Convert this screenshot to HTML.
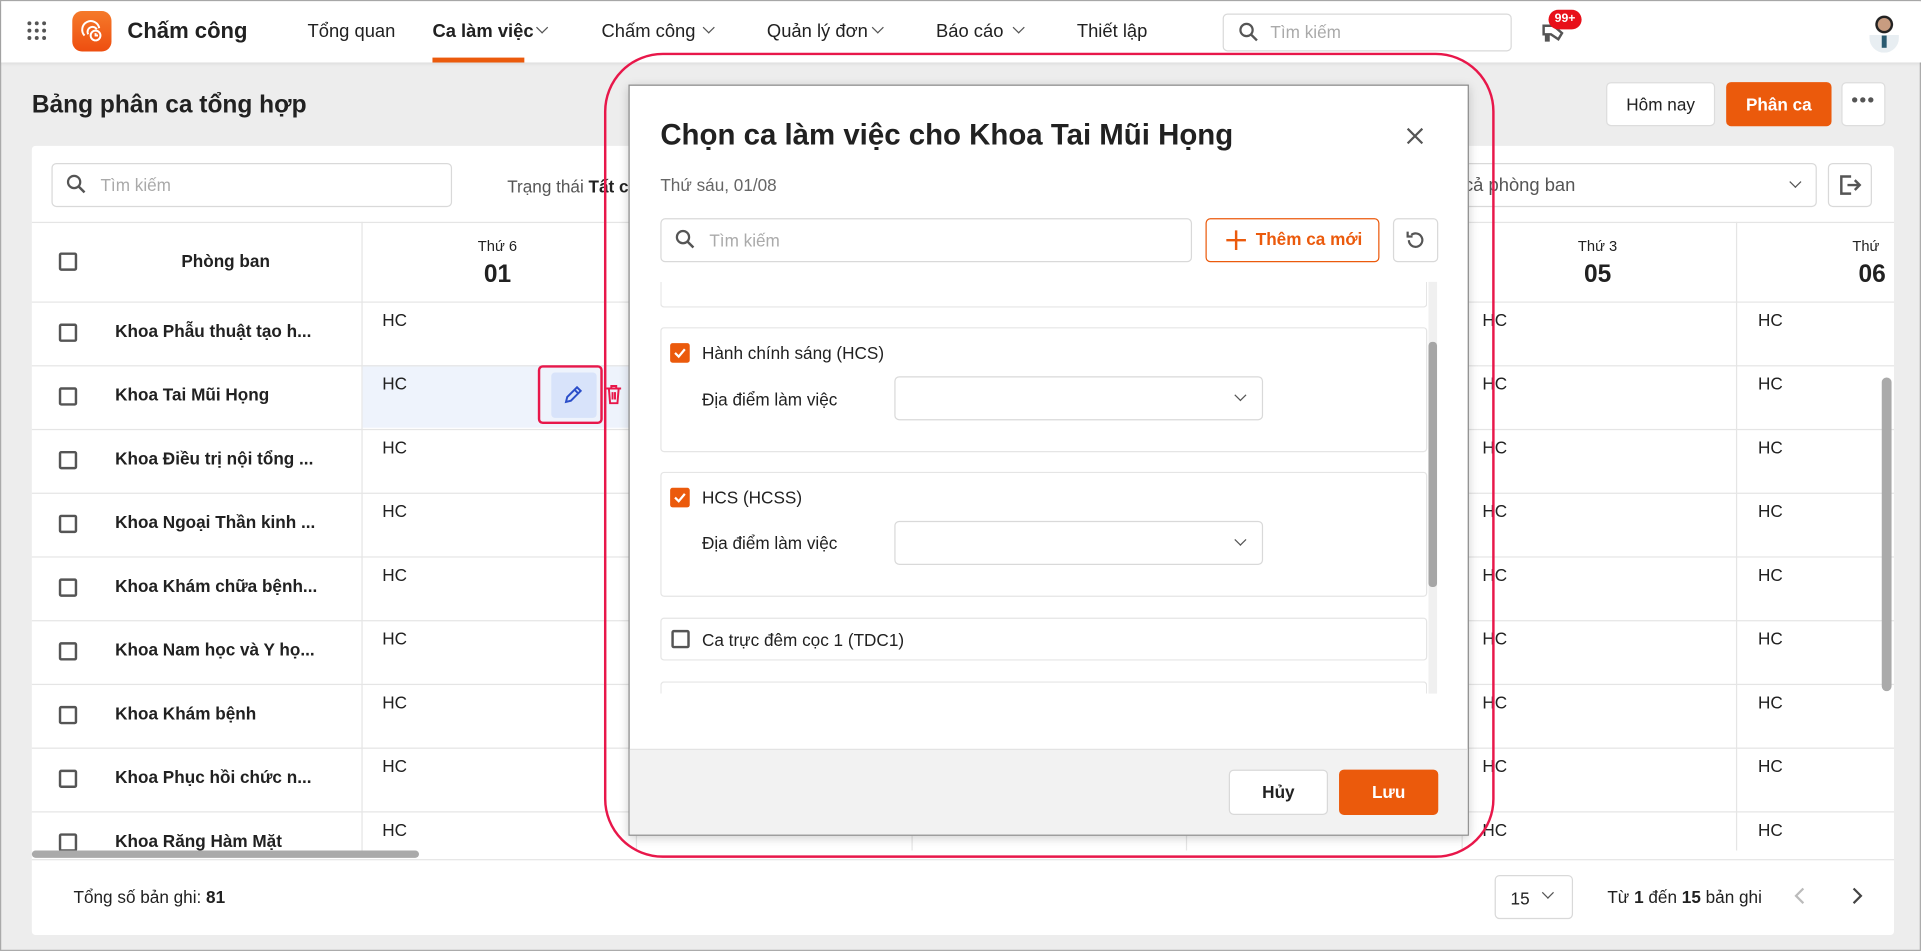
<!DOCTYPE html>
<html><head><meta charset="utf-8">
<style>
*{box-sizing:border-box;margin:0;padding:0}
html,body{width:1921px;height:951px;overflow:hidden;background:#ededed;font-family:"Liberation Sans",Arial,sans-serif;color:#212121}
#s{position:absolute;left:0;top:0;width:1568px;height:776px;transform:scale(1.2251,1.2255);transform-origin:0 0;background:#ededed;border:1px solid #aaa}
.a{position:absolute}
.t{position:absolute;white-space:nowrap;font-size:14px}
.b{font-weight:bold}
.inp{position:absolute;background:#fff;border:1px solid #d9d9d9;border-radius:4px}
.cb{position:absolute;width:15px;height:15px;border:2px solid #555;border-radius:2px;background:#fff}
.cbo{position:absolute;width:16px;height:16px;border-radius:2px;background:#eb5a0c}
.hl{position:absolute;height:1px;background:#e5e5e5}
.vl{position:absolute;width:1px;background:#e5e5e5}
.chev{position:absolute;width:7px;height:7px;border-right:1.6px solid #555;border-bottom:1.6px solid #555;transform:rotate(45deg)}
</style></head><body><div id="s">
<!-- header -->
<div class="a" style="left:0;top:0;width:1568px;height:50px;background:#fff;box-shadow:0 1px 3px rgba(0,0,0,.12)"></div>
<svg class="a" style="left:20px;top:15px" width="18" height="18"><g fill="#555"><circle cx="3" cy="3" r="1.6"/><circle cx="9" cy="3" r="1.6"/><circle cx="15" cy="3" r="1.6"/><circle cx="3" cy="9" r="1.6"/><circle cx="9" cy="9" r="1.6"/><circle cx="15" cy="9" r="1.6"/><circle cx="3" cy="15" r="1.6"/><circle cx="9" cy="15" r="1.6"/><circle cx="15" cy="15" r="1.6"/></g></svg>
<div class="a" style="left:58px;top:8px;width:32px;height:33px;border-radius:8px;background:linear-gradient(#f57a2a,#ee4e10)"></div>
<svg class="a" style="left:62px;top:12px" width="24" height="24"><g fill="none" stroke="#fff" stroke-width="1.6"><path d="M6 16a7 7 0 1 1 12-6"/><path d="M9 15a4 4 0 1 1 7-4"/><circle cx="15" cy="16" r="4"/><path d="M15 14v2h2"/></g></svg>
<div class="t b" style="left:103px;top:14px;font-size:18px">Chấm công</div>
<div class="t" style="left:250px;top:16px;font-size:15px">Tổng quan</div>
<div class="t b" style="left:352px;top:16px;font-size:15px">Ca làm việc</div><div class="chev" style="left:438px;top:18px"></div>
<div class="a" style="left:352px;top:46px;width:75px;height:4px;background:#eb5a0c"></div>
<div class="t" style="left:490px;top:16px;font-size:15px">Chấm công</div><div class="chev" style="left:574px;top:18px"></div>
<div class="t" style="left:625px;top:16px;font-size:15px">Quản lý đơn</div><div class="chev" style="left:712px;top:18px"></div>
<div class="t" style="left:763px;top:16px;font-size:15px">Báo cáo</div><div class="chev" style="left:827px;top:18px"></div>
<div class="t" style="left:878px;top:16px;font-size:15px">Thiết lập</div>
<div class="inp" style="left:997px;top:10px;width:236px;height:31px"></div>
<svg class="a" style="left:1010px;top:17px" width="16" height="16"><circle cx="6.5" cy="6.5" r="5" fill="none" stroke="#555" stroke-width="1.8"/><path d="M10 10l5 5" stroke="#555" stroke-width="2"/></svg>
<div class="t" style="left:1036px;top:17px;color:#aaa">Tìm kiếm</div>
<svg class="a" style="left:1256px;top:14px" width="24" height="24"><path d="M3 6h8l7 6-3 5-6-4H7v5H5v-5H3z" fill="none" stroke="#555" stroke-width="2"/></svg>
<div class="a b" style="left:1263px;top:7px;width:27px;height:16px;border-radius:8px;background:#e8101a;color:#fff;font-size:10px;text-align:center;line-height:16px">99+</div>
<div class="a" style="left:1525px;top:10px;width:24px;height:32px;border-radius:12px;background:radial-gradient(circle at 50% 28%,#c89c80 0 5px,#222 5.5px 7px,transparent 7.5px),linear-gradient(transparent 55%,#e8eef2 55%)"></div>
<div class="a" style="left:1535px;top:28px;width:4px;height:10px;background:#2a5a70"></div>

<div class="t b" style="left:25px;top:74px;font-size:20px">Bảng phân ca tổng hợp</div>
<div class="a" style="left:1310px;top:66px;width:89px;height:36px;background:#fff;border:1px solid #ddd;border-radius:4px;text-align:center;line-height:34px;font-size:14px">Hôm nay</div>
<div class="a b" style="left:1408px;top:66px;width:86px;height:36px;background:#eb5a0c;border-radius:4px;text-align:center;line-height:36px;font-size:14px;color:#fff">Phân ca</div>
<div class="a" style="left:1502px;top:66px;width:36px;height:36px;background:#fff;border:1px solid #ddd;border-radius:4px;text-align:center;line-height:30px;font-size:16px;color:#555;letter-spacing:1px">•••</div>

<!-- card -->
<div class="a" style="left:25px;top:118px;width:1520px;height:644px;background:#fff;border-radius:3px"></div>
<div class="inp" style="left:41px;top:132px;width:327px;height:36px"></div>
<svg class="a" style="left:53px;top:141px" width="16" height="16"><circle cx="6.5" cy="6.5" r="5" fill="none" stroke="#555" stroke-width="1.8"/><path d="M10 10l5 5" stroke="#555" stroke-width="2"/></svg>
<div class="t" style="left:81px;top:142px;color:#aaa">Tìm kiếm</div>
<div class="t" style="left:413px;top:143px;color:#555">Trạng thái <b style="color:#222">Tất c</b></div>
<div class="inp" style="left:1180px;top:132px;width:302px;height:36px"></div>
<div class="t" style="left:1194px;top:142px;color:#555;font-size:15px">cả phòng ban</div>
<div class="chev" style="left:1461px;top:144px"></div>
<div class="inp" style="left:1491px;top:132px;width:36px;height:36px"></div>
<svg class="a" style="left:1499px;top:140px" width="20" height="20"><path d="M11 3H3v14h8M8 10h10M14 6l4 4-4 4" fill="none" stroke="#555" stroke-width="2"/></svg>

<!-- table -->
<div class="hl" style="left:25px;top:180px;width:1520px"></div>
<div class="hl" style="left:25px;top:245px;width:1520px"></div>
<div class="vl" style="left:294px;top:180px;height:513px"></div>
<div class="vl" style="left:518px;top:180px;height:513px"></div>
<div class="vl" style="left:743px;top:180px;height:513px"></div>
<div class="vl" style="left:967px;top:180px;height:513px"></div>
<div class="vl" style="left:1192px;top:180px;height:513px"></div>
<div class="vl" style="left:1416px;top:180px;height:513px"></div>
<div class="cb" style="left:47px;top:205px"></div>
<div class="t b" style="left:147px;top:204px">Phòng ban</div>
<div class="t" style="left:389px;top:193px;font-size:12px">Thứ 6</div>
<div class="t b" style="left:394px;top:212px;font-size:20px">01</div>
<div class="t" style="left:1287px;top:193px;font-size:12px">Thứ 3</div>
<div class="t b" style="left:1292px;top:212px;font-size:20px">05</div>
<div class="t" style="left:1511px;top:193px;font-size:12px">Thứ</div>
<div class="t b" style="left:1516px;top:212px;font-size:20px">06</div>
<div class="a" style="left:295px;top:297px;width:223px;height:51px;background:#eef3fc"></div>
<div id="rows"></div>
<div class="a" style="left:449px;top:303px;width:37px;height:37px;background:#d8e3fa;border-radius:3px"></div>
<svg class="a" style="left:457px;top:311px" width="20" height="20"><path d="M4 16l1-4 8-8 3 3-8 8zM11 6l3 3" fill="none" stroke="#2b4ec9" stroke-width="1.6"/></svg>
<div class="a" style="left:438px;top:297px;width:53px;height:48px;border:2px solid #e8174a;border-radius:4px"></div>
<svg class="a" style="left:492px;top:312px" width="16" height="18"><path d="M2 4h12M6 4V2h4v2M4 4l1 12h6l1-12M7 7v6M9 7v6" fill="none" stroke="#e8174a" stroke-width="1.6"/></svg>
<div class="a" style="left:25px;top:693px;width:316px;height:6px;background:#aaa;border-radius:3px"></div>
<div class="a" style="left:1535px;top:307px;width:8px;height:256px;background:#aaa;border-radius:4px"></div>
<div class="hl" style="left:25px;top:700px;width:1520px"></div>
<div class="t" style="left:59px;top:723px">Tổng số bản ghi: <b>81</b></div>
<div class="inp" style="left:1219px;top:713px;width:64px;height:36px"></div>
<div class="t" style="left:1232px;top:724px">15</div><div class="chev" style="left:1259px;top:724px"></div>
<div class="t" style="left:1311px;top:723px">Từ <b>1</b> đến <b>15</b> bản ghi</div>
<svg class="a" style="left:1462px;top:722px" width="12" height="16"><path d="M9 2L3 8l6 6" fill="none" stroke="#bbb" stroke-width="1.8"/></svg>
<svg class="a" style="left:1509px;top:722px" width="12" height="16"><path d="M3 2l6 6-6 6" fill="none" stroke="#444" stroke-width="1.8"/></svg>

<!-- modal -->
<div class="a" style="left:512px;top:68px;width:686px;height:613px;background:#fff;border:1px solid #888;box-shadow:0 2px 8px rgba(0,0,0,.2)"></div>
<div class="a" style="left:513px;top:610px;width:684px;height:70px;background:#f2f2f2;border-top:1px solid #e3e3e3"></div>
<div class="t b" style="left:538px;top:96px;font-size:24px">Chọn ca làm việc cho Khoa Tai Mũi Họng</div>
<svg class="a" style="left:1146px;top:102px" width="16" height="16"><path d="M2 2l12 12M14 2L2 14" stroke="#555" stroke-width="1.8"/></svg>
<div class="t" style="left:538px;top:142px;color:#666">Thứ sáu, 01/08</div>
<div class="inp" style="left:538px;top:177px;width:434px;height:36px"></div>
<svg class="a" style="left:550px;top:186px" width="16" height="16"><circle cx="6.5" cy="6.5" r="5" fill="none" stroke="#555" stroke-width="1.8"/><path d="M10 10l5 5" stroke="#555" stroke-width="2"/></svg>
<div class="t" style="left:578px;top:187px;color:#aaa">Tìm kiếm</div>
<div class="a" style="left:983px;top:177px;width:142px;height:36px;border:1px solid #eb5a0c;border-radius:4px"></div>
<svg class="a" style="left:999px;top:186px" width="18" height="18"><path d="M9 1v16M1 9h16" stroke="#eb5a0c" stroke-width="2"/></svg>
<div class="t b" style="left:1024px;top:186px;color:#eb5a0c">Thêm ca mới</div>
<div class="inp" style="left:1136px;top:177px;width:37px;height:36px"></div>
<svg class="a" style="left:1145px;top:186px" width="18" height="18"><path d="M4 9a5.5 5.5 0 1 0 2-4.3M3 2v4h4" fill="none" stroke="#555" stroke-width="1.8"/></svg>
<div class="a" style="left:1165px;top:229px;width:7px;height:336px;background:#f0f0f0"></div>
<div class="a" style="left:1165px;top:278px;width:7px;height:200px;background:#a6a6a6;border-radius:3px"></div>
<div class="a" style="left:538px;top:229px;width:626px;height:21px;border:1px solid #e5e5e5;border-top:none;border-radius:0 0 3px 3px"></div>
<div class="a" style="left:538px;top:266px;width:626px;height:102px;border:1px solid #e5e5e5;border-radius:3px"></div>
<div class="cbo" style="left:546px;top:279px"></div>
<svg class="a" style="left:546px;top:279px" width="16" height="16"><path d="M4 8l3 3 5-6" fill="none" stroke="#fff" stroke-width="1.8"/></svg>
<div class="t" style="left:572px;top:279px">Hành chính sáng (HCS)</div>
<div class="t" style="left:572px;top:317px">Địa điểm làm việc</div>
<div class="inp" style="left:729px;top:306px;width:301px;height:36px"></div>
<div class="chev" style="left:1008px;top:318px"></div>
<div class="a" style="left:538px;top:384px;width:626px;height:102px;border:1px solid #e5e5e5;border-radius:3px"></div>
<div class="cbo" style="left:546px;top:397px"></div>
<svg class="a" style="left:546px;top:397px" width="16" height="16"><path d="M4 8l3 3 5-6" fill="none" stroke="#fff" stroke-width="1.8"/></svg>
<div class="t" style="left:572px;top:397px">HCS (HCSS)</div>
<div class="t" style="left:572px;top:434px">Địa điểm làm việc</div>
<div class="inp" style="left:729px;top:424px;width:301px;height:36px"></div>
<div class="chev" style="left:1008px;top:436px"></div>
<div class="a" style="left:538px;top:503px;width:626px;height:35px;border:1px solid #e5e5e5;border-radius:3px"></div>
<div class="cb" style="left:547px;top:513px"></div>
<div class="t" style="left:572px;top:513px">Ca trực đêm cọc 1 (TDC1)</div>
<div class="a" style="left:538px;top:555px;width:626px;height:10px;border:1px solid #e5e5e5;border-bottom:none;border-radius:3px 3px 0 0"></div>
<div class="a b" style="left:1002px;top:627px;width:81px;height:37px;background:#fff;border:1px solid #d9d9d9;border-radius:4px;text-align:center;line-height:35px;font-size:14px">Hủy</div>
<div class="a b" style="left:1092px;top:627px;width:81px;height:37px;background:#eb5a0c;border-radius:4px;text-align:center;line-height:37px;font-size:14px;color:#fff">Lưu</div>

<!-- annotation -->
<div class="a" style="left:492px;top:42px;width:727px;height:657px;border:2px solid #e8174a;border-radius:48px"></div>
</div>
<script>
var n=["Khoa Phẫu thuật tạo h...","Khoa Tai Mũi Họng","Khoa Điều trị nội tổng ...","Khoa Ngoại Thần kinh ...","Khoa Khám chữa bệnh...","Khoa Nam học và Y họ...","Khoa Khám bệnh","Khoa Phục hồi chức n...","Khoa Răng Hàm Mặt"];
var h="";for(var i=0;i<9;i++){var y=245+i*52;
if(i>0)h+='<div class="hl" style="left:25px;top:'+y+'px;width:1520px"></div>';
h+='<div class="cb" style="left:47px;top:'+(y+18)+'px"></div><div class="t b" style="left:93px;top:'+(y+16)+'px">'+n[i]+'</div>';
[311,1209,1434].forEach(function(x){h+='<div class="t" style="left:'+x+'px;top:'+(y+7)+'px">HC</div>'});}
document.getElementById("rows").outerHTML=h;
</script>
</body></html>
